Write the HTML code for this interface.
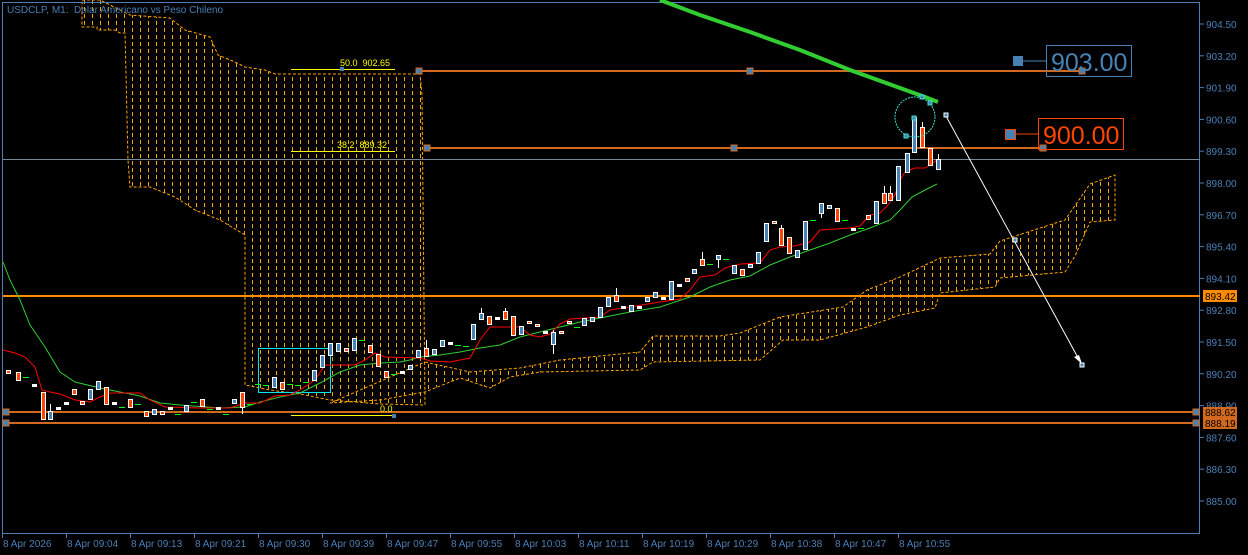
<!DOCTYPE html>
<html><head><meta charset="utf-8"><style>
html,body{margin:0;padding:0;background:#000;width:1248px;height:555px;overflow:hidden}
svg{display:block;font-family:"Liberation Sans",sans-serif}
</style></head><body>
<svg id="s" width="1248" height="555" viewBox="0 0 1248 555" xmlns="http://www.w3.org/2000/svg">
<defs>
<pattern id="vp" x="0" y="0" width="8" height="7" patternUnits="userSpaceOnUse">
<line x1="4.5" y1="0" x2="4.5" y2="4" stroke="#ffa500" stroke-width="1"/>
</pattern>
</defs>
<rect width="1248" height="555" fill="#000"/>
<polygon fill="url(#vp)" stroke="#ffa500" stroke-dasharray="3,2" stroke-width="1"
points="82,0 100,0 130,15 170,18 185,30 210,37 218,55 235,62 245,67 265,70 275,74 420,74 422,95 425,405 380,404 330,400 300,394 270,390 245,385 245,235 220,220 195,210 175,197 150,187 130,187 128,160 125,33 120,33 115,30 97,30 97,27 82,27"/>
<polygon fill="url(#vp)" stroke="#ffa500" stroke-dasharray="3,2" stroke-width="1"
points="425,362 470,372 520,368 560,360 600,356 640,352 653,336 720,336 740,333 780,317 843,307 867,290 900,277 940,258 990,254 1000,241 1040,228 1065,220 1090,184 1115,175 1115,220 1090,222 1075,256 1065,272 1000,278 995,287 940,293 935,308 900,315 867,327 820,340 783,340 760,360 653,362 640,370 540,372 510,377 490,388 460,378 425,392 380,400 330,403"/>
<rect x="2.5" y="2.5" width="1197" height="531" fill="none" stroke="#4a7fb5" stroke-width="1"/>
<line x1="3" y1="159.5" x2="1200" y2="159.5" stroke="#778899" stroke-width="1"/>
<line x1="3" y1="296" x2="1200" y2="296" stroke="#ff8c00" stroke-width="2"/>
<line x1="3" y1="412" x2="1200" y2="412" stroke="#d2691e" stroke-width="2"/>
<line x1="3" y1="423" x2="1200" y2="423" stroke="#d2691e" stroke-width="2"/>
<line x1="420" y1="71" x2="1082" y2="71" stroke="#d2691e" stroke-width="2"/>
<line x1="427" y1="148" x2="1043" y2="148" stroke="#d2691e" stroke-width="2"/>
<rect x="416" y="68" width="6" height="6" fill="#4682b4" stroke="#d2691e"/>
<rect x="747" y="68" width="6" height="6" fill="#4682b4" stroke="#d2691e"/>
<rect x="1079" y="68" width="6" height="6" fill="#4682b4" stroke="#d2691e"/>
<rect x="424" y="145" width="6" height="6" fill="#4682b4" stroke="#d2691e"/>
<rect x="731" y="145" width="6" height="6" fill="#4682b4" stroke="#d2691e"/>
<rect x="1040" y="145" width="6" height="6" fill="#4682b4" stroke="#d2691e"/>
<rect x="3" y="409" width="6" height="6" fill="#4682b4" stroke="#d2691e"/>
<rect x="3" y="420" width="6" height="6" fill="#4682b4" stroke="#d2691e"/>
<rect x="1193" y="409" width="6" height="6" fill="#4682b4" stroke="#d2691e"/>
<rect x="1193" y="420" width="6" height="6" fill="#4682b4" stroke="#d2691e"/>
<g stroke="#ffff00" stroke-width="1">
<line x1="291" y1="69.5" x2="395" y2="69.5"/>
<line x1="291" y1="151.5" x2="395" y2="151.5"/>
<line x1="291" y1="415.5" x2="393" y2="415.5"/>
</g>
<rect x="340" y="67" width="4" height="4" fill="#4682b4"/>
<rect x="392" y="414" width="4" height="4" fill="#4682b4"/>
<g fill="#ffff00" font-size="9">
<text x="340" y="66">50.0&#160;&#160;902.65</text>
<text x="337" y="148">38.2&#160;&#160;889.32</text>
<text x="380" y="412">0.0</text>
</g>
<rect x="258.5" y="348.5" width="72" height="44" fill="none" stroke="#00e5ee" stroke-width="1"/>
<polyline fill="none" stroke="#32cd32" stroke-width="1" points="3,262 10,280 20,300 30,325 45,347 60,372 75,382 100,388 120,392 140,396 160,403 180,405 220,408 245,407 260,402 280,397 300,393 320,383 340,372 360,365 380,363 400,362 410,360 420,357 440,355 460,352 480,348 500,345 520,337 540,332 560,327 580,322 600,318 630,312 660,307 690,297 710,287 730,280 750,276 770,265 790,257 810,250 830,243 850,235 870,228 890,220 900,210 912,197 925,190 937,184"/>
<polyline fill="none" stroke="#ff0000" stroke-width="1" points="3,350 15,353 25,357 35,367 42,390 50,392 60,394 75,400 90,402 100,397 110,393 140,393 150,400 165,407 200,408 230,408 245,403 260,403 275,396 290,395 300,390 315,380 325,365 355,365 365,360 375,353 385,357 420,358 430,361 450,362 470,358 480,340 490,327 520,327 530,335 540,337 550,334 560,324 570,319 600,317 610,310 630,307 660,302 680,299 690,290 700,277 715,275 725,268 740,264 760,263 770,250 780,247 795,246 810,242 820,230 850,228 860,226 870,215 880,213 888,205 895,195 900,180 905,172 915,168 925,168 930,165 937,160"/>
<g id="c"></g>
<polyline fill="none" stroke="#32cd32" stroke-width="4" points="660,0 700,15 750,32 800,50 850,70 900,88 925,97 938,102"/>
<circle cx="915" cy="117" r="20" fill="none" stroke="#40e0d0" stroke-width="1" stroke-dasharray="2,1"/>
<g fill="#4682b4" stroke="#40e0d0">
<rect x="920" y="95" width="4" height="4"/><rect x="928" y="101" width="4" height="4"/><rect x="904" y="134" width="4" height="4"/><rect x="912" y="116" width="4" height="4"/>
</g>
<line x1="946" y1="116" x2="1082" y2="365" stroke="#fff" stroke-width="1"/>
<polygon points="1082,364 1074,357 1079,355" fill="#fff"/>
<rect x="944" y="113" width="4" height="4" fill="#4682b4" stroke="#fff"/>
<rect x="1013" y="238" width="4" height="4" fill="#4682b4" stroke="#fff"/>
<rect x="1080" y="363" width="4" height="4" fill="#4682b4" stroke="#fff"/>
<line x1="1023" y1="61" x2="1046" y2="61" stroke="#4682b4"/>
<rect x="1013" y="56" width="10" height="10" fill="#4682b4"/>
<rect x="1046.5" y="45.5" width="85" height="31" fill="none" stroke="#4682b4"/>
<text x="1051" y="71" font-size="25" fill="#4682b4">903.00</text>
<line x1="1016" y1="134" x2="1038" y2="134" stroke="#ff4500"/>
<rect x="1005.5" y="129.5" width="10" height="10" fill="#4682b4" stroke="#ff4500"/>
<rect x="1038.5" y="118.5" width="85" height="31" fill="none" stroke="#ff4500"/>
<text x="1043" y="144" font-size="25" fill="#ff4500">900.00</text>
<g fill="#4a7fb5" font-size="10" id="ax">
<text x="7" y="13">USDCLP, M1:&#160; Dolar Americano vs Peso Chileno</text>
</g>
<rect x="1203" y="290" width="34" height="12" fill="#ff8c00"/>
<rect x="1203" y="407" width="34" height="11" fill="#d2691e"/>
<rect x="1203" y="418" width="34" height="11" fill="#d2691e"/>
<g font-size="10" fill="#000">
<text x="1205" y="300">893.42</text><text x="1205" y="416">888.62</text><text x="1205" y="427">888.19</text>
</g>
</svg>
<script>
var s="http://www.w3.org/2000/svg",g=document.getElementById("c"),ax=document.getElementById("ax");
function el(n,a,p){var e=document.createElementNS(s,n);for(var k in a)e.setAttribute(k,a[k]);(p||g).appendChild(e);return e;}
var C=[[8,370,373,'w'],[18,372,380,'r'],[26,377,377,'g'],[34,384,386,'w'],[43,392,419,'r'],[50,411,419,'b',404],[58,407,409,'w'],[66,402,404,'w'],[74,389,394,'r'],[82,401,404,'w'],[90,389,399,'b'],[98,381,389,'b'],[106,387,404,'r'],[114,402,404,'w'],[122,407,407,'g'],[130,399,407,'r'],[138,404,404,'g'],[146,411,416,'r'],[154,409,414,'b'],[162,411,414,'w'],[170,407,409,'w'],[178,414,414,'g'],[186,405,411,'b'],[194,402,402,'g'],[202,399,406,'r'],[210,409,409,'g'],[218,407,409,'w'],[226,414,414,'g'],[234,399,403,'b'],[242,392,407,'r',392,414],[250,404,404,'g'],[258,384,384,'g'],[266,385,385,'g'],[274,377,387,'b'],[282,382,389,'r'],[290,384,384,'g'],[298,385,385,'g'],[306,382,382,'g'],[314,370,380,'b'],[322,355,367,'b'],[330,343,355,'b'],[338,343,351,'b'],[346,348,351,'w'],[354,338,350,'b'],[362,340,340,'g'],[370,345,352,'r'],[378,354,366,'r'],[386,371,377,'r'],[394,374,374,'g'],[402,371,373,'w'],[410,365,369,'b'],[418,350,357,'b'],[426,348,356,'r',340],[434,349,354,'b'],[442,340,346,'b'],[450,342,343,'w'],[458,345,345,'g'],[466,346,346,'g'],[473,324,339,'b'],[481,313,319,'b',308],[489,316,324,'r'],[497,317,319,'w'],[505,311,319,'r',308],[513,316,335,'r'],[521,326,334,'b'],[529,321,323,'r'],[537,324,326,'r'],[545,331,333,'w'],[553,332,344,'b',330,354],[561,331,333,'r'],[569,321,323,'r'],[577,327,327,'g'],[584,318,325,'b'],[592,317,321,'b'],[600,307,317,'b'],[608,297,306,'b'],[616,295,301,'r',288],[623,306,307,'w'],[631,305,311,'b'],[639,306,308,'w'],[647,297,301,'b'],[655,292,297,'b'],[663,297,299,'w'],[671,281,299,'b'],[679,284,284,'w'],[687,278,281,'w'],[694,269,273,'b'],[702,259,265,'r',252],[710,264,264,'g'],[718,255,259,'b',255,268],[726,259,259,'g'],[734,265,273,'b'],[742,269,275,'r'],[750,264,267,'b'],[758,252,263,'b'],[766,223,241,'b'],[774,221,223,'r'],[781,228,245,'r',225],[789,237,253,'r'],[797,250,257,'b'],[805,221,249,'b'],[813,220,220,'g'],[821,203,213,'b',203,218],[829,205,208,'b'],[837,208,221,'r'],[845,220,220,'g'],[853,228,230,'w'],[861,228,228,'g'],[868,215,219,'r'],[876,201,223,'b'],[884,193,203,'r',186],[890,193,200,'r',186],[898,166,200,'b'],[907,153,172,'b'],[914,117,152,'b',117,153],[922,127,147,'r',122],[930,148,165,'r'],[938,159,169,'b',154]];
C.forEach(function(c){var x=c[0],t=c[1],b=c[2],ty=c[3];
 if(ty=='g'){el('line',{x1:x-3,x2:x+3,y1:t+.5,y2:t+.5,stroke:'#00ff00','stroke-width':1});return;}
 if(c[4]!==undefined||c[5]!==undefined){el('line',{x1:x+.5,x2:x+.5,y1:c[4]||t,y2:c[5]||b,stroke:'#fff'});}
 var f=ty=='b'?'#4682b4':ty=='r'?'#ff4500':'#f04a10';
 if(b-t<3){el('rect',{x:x-2,y:t,width:5,height:3,fill:'#fff'});if(ty!='w')el('rect',{x:x-1,y:t+1,width:3,height:1,fill:f});return;}
 el('rect',{x:x-1.5,y:t+.5,width:4,height:b-t,fill:f,stroke:'#fff','stroke-width':1});
});
var P=["904.50","903.20","901.90","900.60","899.30","898.00","896.70","895.40","894.10","892.80","891.50","890.20","888.90","887.60","886.30","885.00"];
P.forEach(function(p,i){var y=24+i*31.8;el('line',{x1:1200,x2:1204,y1:y,y2:y,stroke:'#4a7fb5'},ax);var t=el('text',{x:1206,y:y+4},ax);t.textContent=p;});
var T=["8 Apr 2026","8 Apr 09:04","8 Apr 09:13","8 Apr 09:21","8 Apr 09:30","8 Apr 09:39","8 Apr 09:47","8 Apr 09:55","8 Apr 10:03","8 Apr 10:11","8 Apr 10:19","8 Apr 10:29","8 Apr 10:38","8 Apr 10:47","8 Apr 10:55"];
T.forEach(function(p,i){var x=2+i*64;el('line',{x1:x+.5,x2:x+.5,y1:534,y2:538,stroke:'#4a7fb5'},ax);var t=el('text',{x:x+1,y:547},ax);t.textContent=p;});
</script>
</body></html>
